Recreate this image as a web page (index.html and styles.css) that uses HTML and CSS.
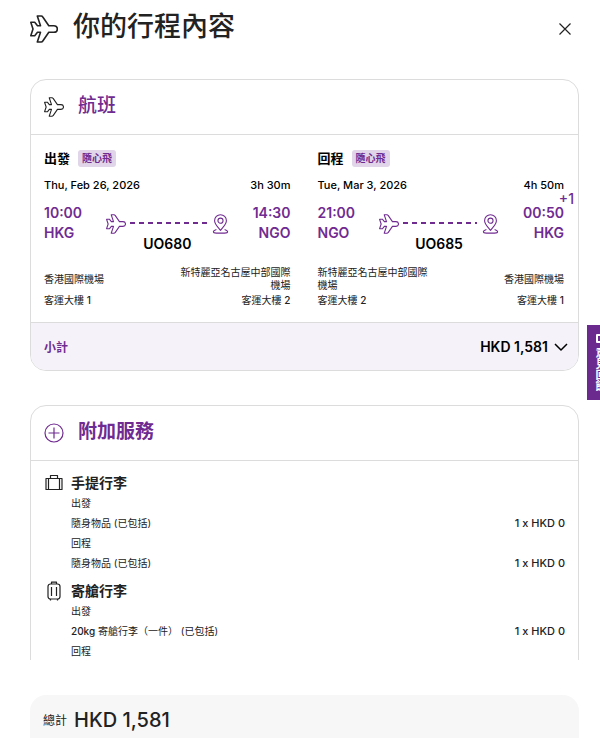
FILE: index.html
```html
<!DOCTYPE html>
<html lang="zh-Hant">
<head>
    <meta charset="UTF-8">
    <meta name="viewport" content="width=device-width, initial-scale=1.0">
    <title>你的行程內容</title>
    <link rel="stylesheet" href="styles.css">
</head>
<body>
    <svg class="sprite" aria-hidden="true">
        <symbol id="plane" viewBox="0 0 28 28">
            <path d="M27.300 14c0-2-1.500-3.300-3.500-3.300h-5L12.800 2q-.6-1-1.600-1H7.300L10.500 10.700H7.500L4.700 7.300H.8L3 14 .8 20.700h3.900l2.800-3.400h3L7.300 27h3.900q1 0 1.600-1l6-8.700h5c2 0 3.500-1.300 3.500-3.300z"/>
        </symbol>
        <symbol id="pin" viewBox="0 0 18 22">
            <path d="M9 18C6 14 2.500 11 2.500 7.300a6.500 6.500 0 0 1 13 0C15.500 11 12 14 9 18z"/>
            <circle cx="9" cy="7.300" r="2.800"/>
            <path d="M4.500 17c-4.500 1.500-4.500 4 0 4h9c4.500 0 4.500-2.500 0-4"/>
        </symbol>
    </svg>

    <div class="page">
        <header class="page-header">
            <svg class="icon-large"><use href="#plane"/></svg>
            <h1>你的行程內容</h1>
            <button class="close" type="button" aria-label="關閉">
                <svg viewBox="0 0 12 12"><path d="M.5.5l11 11M11.500.5l-11 11"/></svg>
            </button>
        </header>

        <main class="content">
            <section class="card">
                <div class="card-header">
                    <svg class="icon"><use href="#plane"/></svg>
                    <h2 class="medium">航班</h2>
                </div>
                <div class="journeys">
                    <article class="journey">
                        <div class="direction"><h3>出發</h3><span class="badge">隨心飛</span></div>
                        <div class="row date"><span>Thu, Feb 26, 2026</span><span>3h 30m</span></div>
                        <div class="flight">
                            <div class="stop">10:00<br>HKG</div>
                            <div class="route">
                                <div class="track">
                                    <svg class="icon"><use href="#plane"/></svg>
                                    <span class="dashes"></span>
                                    <svg class="pin"><use href="#pin"/></svg>
                                </div>
                                <div class="number">UO680</div>
                            </div>
                            <div class="stop end">14:30<br>NGO</div>
                        </div>
                        <div class="row airports"><span>香港國際機場</span><span class="end">新特麗亞名古屋中部國際機場</span></div>
                        <div class="row terminals"><span>客運大樓 <b>1</b></span><span>客運大樓 <b>2</b></span></div>
                    </article>
                    <article class="journey">
                        <div class="direction"><h3>回程</h3><span class="badge">隨心飛</span></div>
                        <div class="row date"><span>Tue, Mar 3, 2026</span><span>4h 50m</span></div>
                        <div class="flight">
                            <div class="stop">21:00<br>NGO</div>
                            <div class="route">
                                <div class="track">
                                    <svg class="icon"><use href="#plane"/></svg>
                                    <span class="dashes"></span>
                                    <svg class="pin"><use href="#pin"/></svg>
                                </div>
                                <div class="number">UO685</div>
                            </div>
                            <div class="stop end">00:50<br>HKG<span class="next-day">+1</span></div>
                        </div>
                        <div class="row airports"><span>新特麗亞名古屋中部國際機場</span><span class="end">香港國際機場</span></div>
                        <div class="row terminals"><span>客運大樓 <b>2</b></span><span>客運大樓 <b>1</b></span></div>
                    </article>
                </div>
                <div class="subtotal">
                    <span class="subtotal-label">小計</span>
                    <button class="subtotal-price" type="button" aria-expanded="false">
                        HKD 1,581
                        <svg viewBox="0 0 14 8"><path d="M1 1l6 6 6-6"/></svg>
                    </button>
                </div>
            </section>

            <section class="card">
                <div class="card-header">
                    <svg class="icon thin purple" viewBox="0 0 20 20"><circle cx="10" cy="10" r="9"/><path d="M10 4.500v11M4.500 10h11"/></svg>
                    <h2>附加服務</h2>
                </div>
                <div class="extras">
                    <div class="extra">
                        <svg class="icon" viewBox="0 0 20 20"><path d="M2 5.500h16v11H2zM4.500 5.500v11M15.500 5.500v11M6.500 5.500v-3h7v3"/></svg>
                        <div class="extra-info">
                            <h3>手提行李</h3>
                            <div class="line">出發</div>
                            <div class="line"><span>隨身物品 (已包括)</span><span class="price">1 x HKD 0</span></div>
                            <div class="line">回程</div>
                            <div class="line"><span>隨身物品 (已包括)</span><span class="price">1 x HKD 0</span></div>
                        </div>
                    </div>
                    <div class="extra">
                        <svg class="icon" viewBox="0 0 20 20"><rect x="4" y="3" width="12" height="15" rx="2.500"/><path d="M7.500 3V1.200h5V3M7.500 6v9M12.500 6v9M6.500 18v1.500M13.500 18v1.500"/></svg>
                        <div class="extra-info">
                            <h3>寄艙行李</h3>
                            <div class="line">出發</div>
                            <div class="line"><span><b>20kg</b> 寄艙行李（一件） (已包括)</span><span class="price">1 x HKD 0</span></div>
                            <div class="line">回程</div>
                        </div>
                    </div>
                </div>
            </section>
        </main>

        <footer class="total">
            <span class="total-label">總計</span>
            <span class="total-price">HKD 1,581</span>
        </footer>
    </div>

    <button class="side-tab" type="button"><span class="side-icon"></span>意見回饋</button>
</body>
</html>
```

FILE: styles.css
```css
* {
    box-sizing: border-box;
}
body {
    margin: 0;
    font-family: Inter, "Noto Sans CJK TC", sans-serif;
    font-size: 10px;
    color: #222;
    background: #fff;
    overflow: hidden;
}
h1, h2, h3 {
    margin: 0;
}
button {
    font-family: inherit;
    color: inherit;
    background: none;
    border: 0;
    padding: 0;
    cursor: pointer;
}
svg {
    fill: none;
    stroke: currentColor;
    stroke-width: 1.2px;
    stroke-linejoin: round;
    flex-shrink: 0;
}
.sprite {
    display: none;
}
.page {
    display: flex;
    flex-direction: column;
    height: 100vh;
    padding: 0 21px 0 30px;
}
.page-header {
    display: flex;
    align-items: center;
    gap: 15px;
    height: 58px;
    flex-shrink: 0;
}
.page-header h1 {
    flex: 1;
    font-size: 27px;
    font-weight: 500;
    line-height: 54px;
    padding-bottom: 4px;
}
.icon-large {
    width: 28px;
    height: 28px;
    stroke-width: 1.6px;
}
.icon {
    width: 20px;
    height: 20px;
}
.card-header .icon,
.track .icon {
    stroke-width: 1.5px;
}
.card-header .thin {
    stroke-width: 1.2px;
}
.close {
    padding: 7px 8px;
}
.close svg {
    display: block;
    width: 12px;
    height: 12px;
}

.content {
    flex: 1;
    min-height: 0;
    padding-top: 21px;
    overflow: hidden;
}
.card {
    border: 1px solid #dcdcdc;
    border-radius: 16px;
    margin-bottom: 34px;
    overflow: hidden;
}
.card-header {
    display: flex;
    align-items: center;
    gap: 14px;
    height: 55px;
    padding: 0 13px;
    border-bottom: 1px solid #dcdcdc;
}
.card-header h2 {
    font-size: 19px;
    font-weight: 700;
    line-height: 28px;
    padding-bottom: 3px;
    color: #702b91;
}
.card-header .medium {
    font-weight: 500;
}
.purple {
    color: #702b91;
}

.journeys {
    display: grid;
    grid-template-columns: 1fr 1fr;
    gap: 27px;
    padding: 14px 14px 15px 13px;
}
.direction {
    display: flex;
    align-items: center;
    gap: 8px;
    height: 19px;
    color: #000;
}
.direction h3 {
    font-size: 13px;
    line-height: 19px;
}
.badge {
    padding: 0 4px;
    font-size: 10px;
    font-weight: 700;
    line-height: 17px;
    color: #702b91;
    background: #e1d5e9;
    border-radius: 3px;
}
.row {
    display: flex;
    justify-content: space-between;
}
.date {
    margin-top: 9px;
    font-size: 11px;
    font-weight: 500;
    line-height: 16px;
    color: #000;
}
.flight {
    display: flex;
    gap: 24px;
    margin-top: 10px;
}
.stop {
    position: relative;
    font-size: 14px;
    font-weight: 600;
    line-height: 20px;
    color: #702b91;
}
.end {
    text-align: right;
}
.next-day {
    position: absolute;
    top: -14px;
    right: -10px;
    font-weight: 500;
}
.route {
    flex: 1;
    padding-top: 11px;
    text-align: center;
}
.track {
    display: flex;
    align-items: center;
    color: #702b91;
}
.dashes {
    flex: 1;
    height: 2px;
    margin: 0 5px 2px 4px;
    background: repeating-linear-gradient(90deg, #702b91 0 5px, transparent 5px 9px);
}
.pin {
    width: 17px;
    height: 20px;
}
.number {
    font-size: 14px;
    font-weight: 600;
    line-height: 20px;
    color: #000;
}
.airports {
    align-items: center;
    min-height: 26px;
    margin-top: 12px;
    line-height: 13px;
}
.airports span {
    max-width: 115px;
}
.terminals {
    margin-top: 1px;
    line-height: 14px;
}
b {
    font-weight: 500;
}
.subtotal {
    display: flex;
    align-items: center;
    justify-content: space-between;
    height: 48px;
    padding: 0 10px 0 13px;
    background: #f5f3f9;
    border-top: 1px solid #dcdcdc;
}
.subtotal-label {
    font-size: 12px;
    font-weight: 700;
    color: #702b91;
}
.subtotal-price {
    display: flex;
    align-items: center;
    gap: 6px;
    font-size: 14px;
    font-weight: 600;
    color: #000;
}
.subtotal-price svg {
    width: 14px;
    height: 8px;
    stroke-width: 1.5px;
}

.extras {
    padding: 12px 13px;
}
.extra {
    display: flex;
    gap: 7px;
    margin-bottom: 8px;
}
.extra-info {
    flex: 1;
}
.extra h3 {
    font-size: 14px;
    line-height: 20px;
}
.line {
    display: flex;
    justify-content: space-between;
    line-height: 20px;
}
.price {
    font-size: 11px;
    font-weight: 500;
}

.total {
    display: flex;
    align-items: center;
    gap: 7px;
    flex-shrink: 0;
    height: 43px;
    margin-top: 35px;
    padding: 6px 13px 0;
    background: #f7f7f7;
    border-radius: 16px 16px 0 0;
}
.total-label {
    font-size: 12px;
}
.total-price {
    font-size: 20px;
    font-weight: 500;
}

/* hangs over the right edge of the window until hovered */
.side-tab {
    position: fixed;
    top: 325px;
    right: -13px;
    display: flex;
    align-items: center;
    width: 26px;
    height: 75px;
    padding: 9px 0;
    font-size: 11px;
    font-weight: 700;
    line-height: 12px;
    white-space: nowrap;
    color: #fff;
    background: #6b2a8e;
    writing-mode: vertical-rl;
}
.side-tab:hover {
    right: 0;
}
.side-icon {
    width: 9px;
    height: 10px;
    margin-bottom: 4px;
    border: 2px solid #fff;
    border-radius: 1px;
}
```
